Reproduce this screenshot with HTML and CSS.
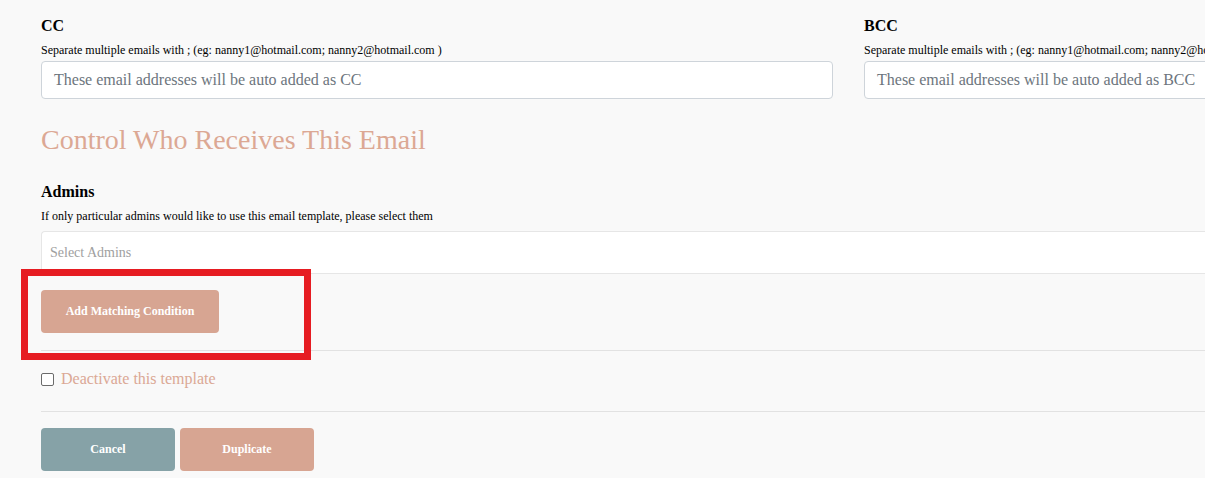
FILE: index.html
```html
<!DOCTYPE html>
<html>
<head>
<meta charset="utf-8">
<link rel="stylesheet" href="styles.css">
</head>
<body>
<div class="page">
  <div class="row-emails">
    <div class="field">
      <div class="label">CC</div>
      <div class="help">Separate multiple emails with ; (eg: nanny1@hotmail.com; nanny2@hotmail.com )</div>
      <div class="input">These email addresses will be auto added as CC</div>
    </div>
    <div class="field">
      <div class="label">BCC</div>
      <div class="help">Separate multiple emails with ; (eg: nanny1@hotmail.com; nanny2@hotmail.com )</div>
      <div class="input">These email addresses will be auto added as BCC</div>
    </div>
  </div>

  <h2 class="section-title">Control Who Receives This Email</h2>

  <div class="label admins-label">Admins</div>
  <div class="help">If only particular admins would like to use this email template, please select them</div>
  <div class="select">Select Admins</div>

  <div class="condition-area">
    <button class="btn btn-salmon btn-add">Add Matching Condition</button>
    <div class="highlight"></div>
  </div>

  <label class="check-row">
    <span class="checkbox"></span>
    <span class="check-text">Deactivate this template</span>
  </label>

  <div class="actions">
    <button class="btn btn-teal">Cancel</button>
    <button class="btn btn-salmon">Duplicate</button>
  </div>
</div>
</body>
</html>
```
FILE: styles.css
```css
html, body {
  margin: 0;
  padding: 0;
  overflow: hidden;
  background: #f9f9f9;
}
body {
  font-family: "Liberation Serif", "Times New Roman", serif;
  color: #000;
}
.page {
  width: 1615px;
  padding: 0 0 0 41px;
}
.row-emails {
  display: grid;
  grid-template-columns: 792px 792px;
  column-gap: 31px;
  padding-top: 17px;
}
.field {
  min-width: 0;
}
.label {
  font-weight: bold;
  font-size: 16px;
  line-height: 18px;
  margin-bottom: 8px;
}
.help {
  font-size: 12px;
  line-height: 14px;
  margin-bottom: 4px;
  white-space: nowrap;
}
.input {
  box-sizing: border-box;
  height: 38px;
  border: 1px solid #ced4da;
  border-radius: 4px;
  background: #fff;
  padding: 0 12px;
  line-height: 36px;
  font-size: 16px;
  color: #6c757d;
}
.section-title {
  margin: 25px 0 0;
  font-weight: normal;
  font-size: 28px;
  line-height: 32px;
  color: #dca894;
}
.admins-label {
  margin-top: 27px;
}
.select {
  box-sizing: border-box;
  margin-top: 8px;
  height: 43px;
  border: 1px solid #e6e6e6;
  border-right: none;
  border-radius: 4px 0 0 0;
  background: #fff;
  padding: 0 8px;
  line-height: 41px;
  font-size: 14px;
  color: #a0a0a0;
}
.condition-area {
  position: relative;
  padding: 16px 0 17px;
  border-bottom: 1px solid #e2e2e2;
}
.highlight {
  position: absolute;
  left: -20px;
  top: -5px;
  width: 290px;
  height: 91px;
  box-sizing: border-box;
  border: 7px solid #e61c22;
  pointer-events: none;
}
.btn {
  border: none;
  border-radius: 4px;
  color: #fff;
  font-family: "Liberation Serif", "Times New Roman", serif;
  font-weight: bold;
  font-size: 12px;
  height: 43px;
  padding: 0;
  cursor: pointer;
}
.btn-salmon { background: #d7a592; }
.btn-teal { background: #86a2a7; }
.btn-add { width: 178px; display: block; }
.check-row {
  display: flex;
  align-items: flex-start;
  gap: 7px;
  height: 61px;
  border-bottom: 1px solid #e2e2e2;
  box-sizing: border-box;
  padding-top: 19px;
}
.checkbox {
  width: 11px;
  height: 11px;
  border: 1px solid #6b6b6b;
  border-radius: 2px;
  background: #fff;
  margin-top: 3px;
}
.check-text {
  font-size: 16px;
  line-height: 18px;
  color: #dba895;
}
.actions {
  display: flex;
  gap: 5px;
  padding-top: 16px;
}
.actions .btn { width: 134px; }
```
